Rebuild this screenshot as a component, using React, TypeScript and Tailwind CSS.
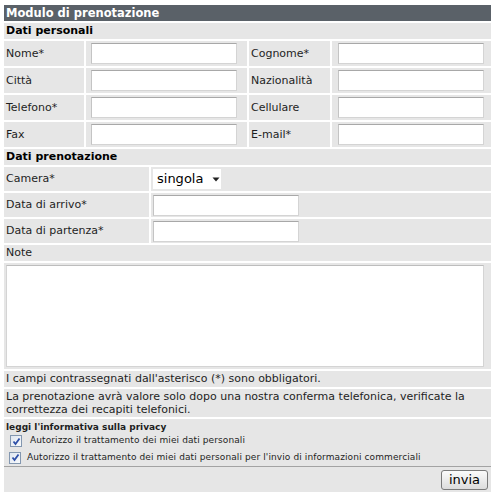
import React from "react";

const font = { fontFamily: '"DejaVu Sans", Verdana, sans-serif' };

function Input({ w = "w-[146px]" }: { w?: string }) {
  return (
    <div
      className={`${w} h-[21px] bg-white border border-[#d4d4d4] border-t-[#a8a8a8] border-l-[#c4c4c4]`}
    />
  );
}

function Check() {
  return (
    <span className="inline-flex items-center justify-center w-[12px] h-[12px] border border-[#8397b0] bg-gradient-to-br from-[#dfe6f0] to-[#f8fafc] shrink-0">
      <svg width="9" height="9" viewBox="0 0 9 9">
        <path d="M1.5 4.5 L3.5 7 L7.5 1.5" fill="none" stroke="#2d4fa8" strokeWidth="1.8" />
      </svg>
    </span>
  );
}

export default function App() {
  const cell = "bg-[#e6e6e6]";
  return (
    <div className="bg-white w-[500px] h-[500px] pt-[5px] pl-[4px] text-[#1e1e1e]" style={font}>
      <div className="w-[487px] flex flex-col gap-[2px]">
        <div className="h-[16px] bg-[#5a6168] text-white font-bold text-[11.5px] leading-[16px] pl-[2px]">
          Modulo di prenotazione
        </div>
        <div className={`${cell} h-[16px] font-bold text-[11px] leading-[16px] pl-[2px] text-black`}>
          Dati personali
        </div>
        {[
          ["Nome*", "Cognome*"],
          ["Città", "Nazionalità"],
          ["Telefono*", "Cellulare"],
          ["Fax", "E-mail*"],
        ].map(([a, b]) => (
          <div key={a} className="flex gap-[2px] h-[25px] text-[11px]">
            <div className={`${cell} w-[80px] flex items-center pl-[2px] pt-[2px]`}>{a}</div>
            <div className={`${cell} w-[161px] flex items-center pl-[5px]`}>
              <Input />
            </div>
            <div className={`${cell} w-[81px] flex items-center pl-[2px] pt-[2px]`}>{b}</div>
            <div className={`${cell} w-[159px] flex items-center pl-[6px]`}>
              <Input />
            </div>
          </div>
        ))}
        <div className={`${cell} h-[16px] font-bold text-[11px] leading-[16px] pl-[2px] text-black`}>
          Dati prenotazione
        </div>
        <div className="flex gap-[2px] h-[24px] text-[11px]">
          <div className={`${cell} w-[145px] flex items-center pl-[2px]`}>Camera*</div>
          <div className={`${cell} flex-1 flex items-center pl-[2px]`}>
            <div className="w-[68px] h-[20px] bg-white flex items-center pl-[4px] text-[13px] text-black">
              <span>singola</span>
              <svg className="ml-[9px]" width="8" height="5" viewBox="0 0 8 5">
                <path d="M0.5 0.5 L7.5 0.5 L4 4.5 Z" fill="#222" />
              </svg>
            </div>
          </div>
        </div>
        {["Data di arrivo*", "Data di partenza*"].map((l) => (
          <div key={l} className="flex gap-[2px] h-[24px] text-[11px]">
            <div className={`${cell} w-[145px] flex items-center pl-[2px]`}>{l}</div>
            <div className={`${cell} flex-1 flex items-center pl-[2px]`}>
              <Input />
            </div>
          </div>
        ))}
        <div className={`${cell} h-[16px] text-[11px] leading-[16px] pl-[2px]`}>Note</div>
        <div className={`${cell} h-[106px] pl-[2px] pt-[2px]`}>
          <div className="w-[478px] h-[102px] bg-white border border-[#d4d4d4] border-t-[#bdbdbd]" />
        </div>
        <div className={`${cell} h-[16px] text-[11px] leading-[16px] pl-[2px]`}>
          I campi contrassegnati dall'asterisco (*) sono obbligatori.
        </div>
        <div className={`${cell} h-[28px] text-[11px] leading-[13px] pl-[2px] pt-[1px]`}>
          La prenotazione avrà valore solo dopo una nostra conferma telefonica, verificate la
          correttezza dei recapiti telefonici.
        </div>
        <div className="flex flex-col">
          <div className={`${cell} h-[48px] border-b border-[#a3a3a3] pl-[2px] pt-[2px] text-[9px] tracking-[0.1px]`}>
            <div className="font-bold leading-[12px] tracking-normal">leggi l'informativa sulla privacy</div>
            <div className="flex items-center gap-[8px] h-[16px] pl-[4px]">
              <Check />
              <span>Autorizzo il trattamento dei miei dati personali</span>
            </div>
            <div className="flex items-center gap-[6px] h-[17px] pl-[3px]">
              <Check />
              <span>
                Autorizzo il trattamento dei miei dati personali per l'invio di informazioni
                commerciali
              </span>
            </div>
          </div>
          <div className={`${cell} h-[25px] flex items-center justify-end pr-[3px]`}>
            <button className="w-[47px] h-[20px] rounded-[3px] border border-[#7a7a7a] bg-gradient-to-b from-[#fbfbfb] to-[#dcdcdc] text-[13px] leading-[18px] text-black">
              invia
            </button>
          </div>
        </div>
      </div>
    </div>
  );
}
